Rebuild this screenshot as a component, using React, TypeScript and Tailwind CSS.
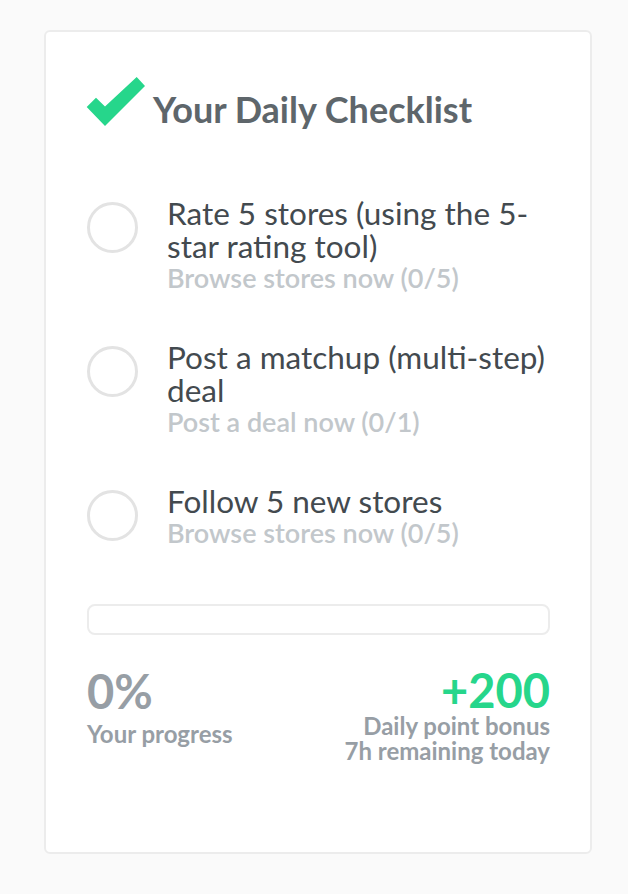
const tasks = [
  { title: "Rate 5 stores (using the 5-star rating tool)", sub: "Browse stores now (0/5)" },
  { title: "Post a matchup (multi-step) deal", sub: "Post a deal now (0/1)" },
  { title: "Follow 5 new stores", sub: "Browse stores now (0/5)" },
];

const CheckIcon = () => (
  <svg width="60" height="50" viewBox="0 0 60 50" className="shrink-0 -ml-[1px] -mt-[1px]">
    <polygon points="0.7,30 10,20.7 19,29.5 50.7,0 59,9 19,49" fill="#26d68b" />
  </svg>
);

export default function App() {
  return (
    <div className="min-h-[894px] w-full bg-[#fafafa] pt-[30px] pl-[44px] pb-[40px] font-['Lato','Open_Sans',sans-serif]">
      <div className="w-[548px] bg-white border-2 border-[#ececec] rounded-[6px] h-[824px] pt-[46px] pl-[41px] pr-[40px]">
        <div className="flex items-start h-[54px] gap-[7px]">
          <CheckIcon />
          <h1 className="mt-[9px] text-[36px] font-bold text-[#5e666b] leading-[44px]">Your Daily Checklist</h1>
        </div>

        <ul className="mt-[65px] flex flex-col gap-[48px]">
          {tasks.map((t) => (
            <li key={t.title} className="flex items-start">
              <span className="mt-[5px] w-[51px] h-[51px] rounded-full border-[3px] border-[#e3e3e3] shrink-0" />
              <div className="ml-[29px]">
                <p className="text-[31.5px] leading-[33px] text-[#434a4f]">{t.title}</p>
                <p className="text-[27px] leading-[30px] font-semibold text-[#c2c7cb]">{t.sub}</p>
              </div>
            </li>
          ))}
        </ul>

        <div className="mt-[56px] h-[31px] rounded-[8px] border-2 border-[#ececec]" />

        <div className="mt-[32px] flex justify-between items-start font-bold text-[#979ea5]">
          <div>
            <div className="text-[47px] leading-[48px]">0%</div>
            <div className="text-[24px] leading-[26px] mt-[6px]">Your progress</div>
          </div>
          <div className="text-right">
            <div className="text-[47px] leading-[46px] text-[#26d68b]">+200</div>
            <div className="text-[24px] leading-[25px]">Daily point bonus</div>
            <div className="text-[24px] leading-[25px]">7h remaining today</div>
          </div>
        </div>
      </div>
    </div>
  );
}
